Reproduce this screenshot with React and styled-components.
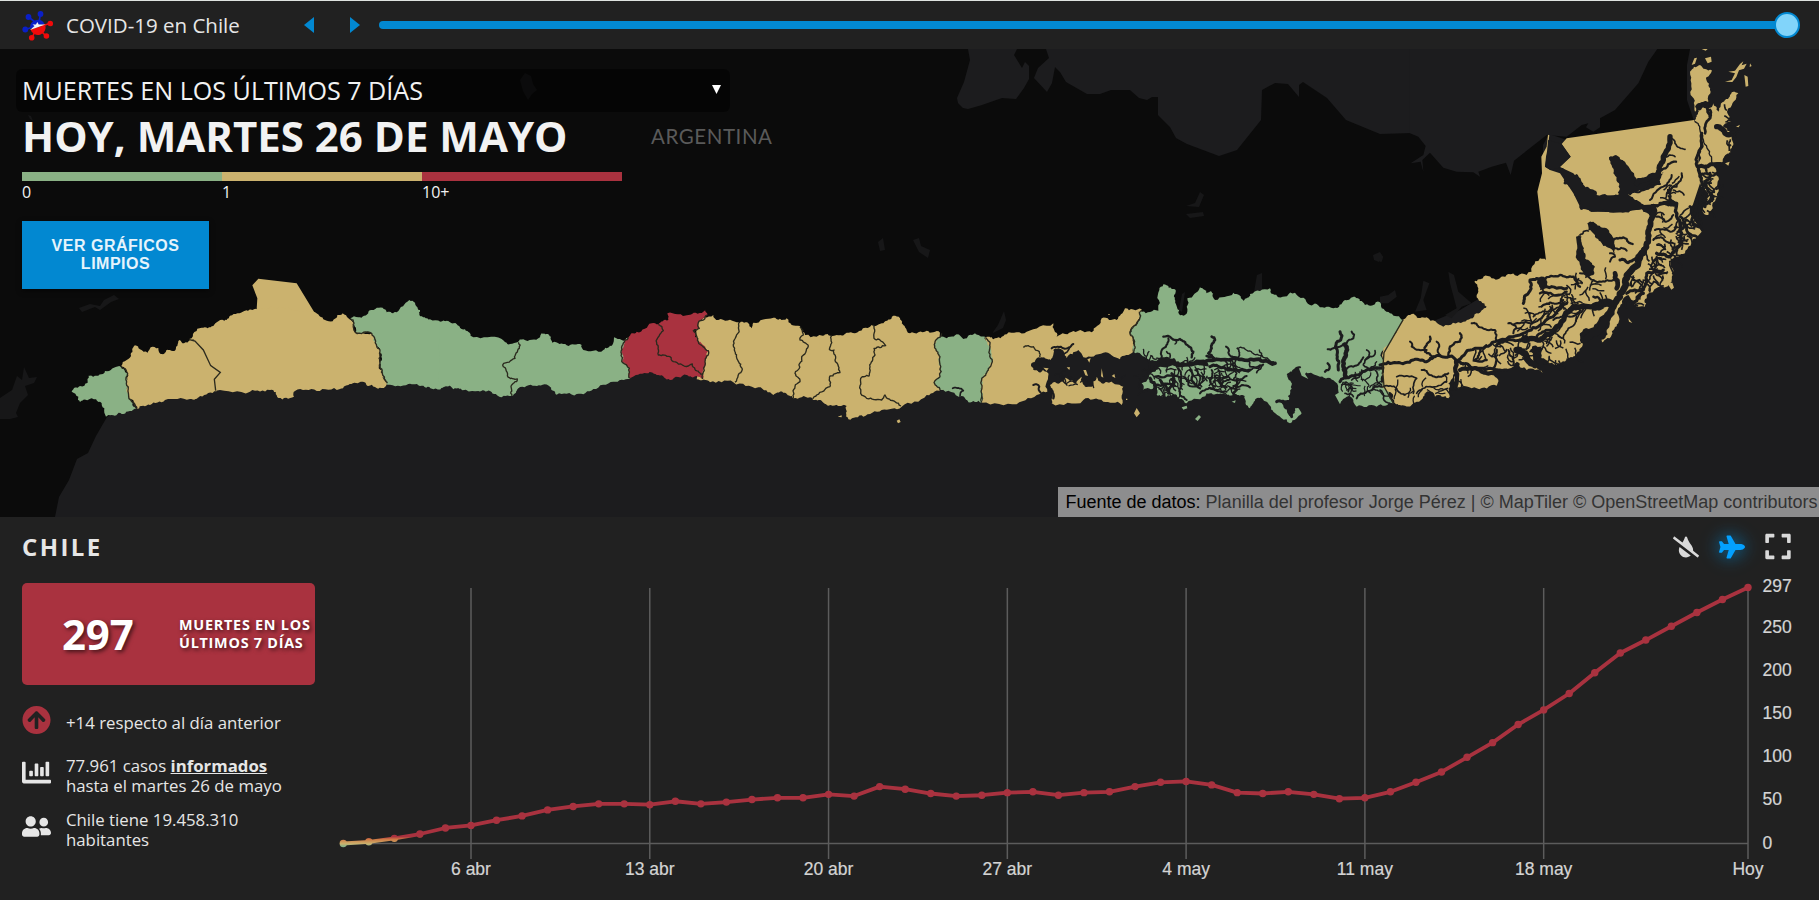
import React from 'react';
import styled, { createGlobalStyle } from 'styled-components';
import { FaArrowCircleUp, FaChartBar, FaUserFriends, FaTintSlash, FaPlane, FaExpand } from 'react-icons/fa';

const GREEN = '#8ab185';
const SAND = '#cbb26e';
const RED = '#a9323f';
const SEA = '#1c1c1e';
const LAND = '#0b0b0b';
const SANS = "'Open Sans', 'Noto Sans', sans-serif";
const ARIAL = "'Liberation Sans', Arial, sans-serif";

const Global = createGlobalStyle`
  * { box-sizing: border-box; }
  body { margin: 0; background: #212121; color: #e6e6e6; font-family: ${SANS}; overflow: hidden; }
`;

const Page = styled.div`
  width: 1819px;
  height: 900px;
  display: flex;
  flex-direction: column;
  background: #212121;
`;

/* ---------- header ---------- */
const Header = styled.header`
  height: 49px;
  flex: none;
  display: flex;
  align-items: center;
  border-top: 1px solid #dfe3e0;
  padding: 0 32px 0 22px;
`;
const Title = styled.h1`
  margin: 0 0 0 13px;
  width: 238px;
  font-size: 20.5px;
  font-weight: 400;
  line-height: 28px;
  white-space: nowrap;
`;
const StepButton = styled.button`
  border: 0;
  background: none;
  padding: 0;
  width: 10px;
  height: 16px;
  margin-right: ${(p) => p.$gap}px;
  svg { display: block; }
`;
const Slider = styled.div`
  flex: 1;
  height: 26px;
  display: flex;
  align-items: center;
  position: relative;
`;
const Track = styled.div`
  flex: 1;
  height: 8px;
  border-radius: 4px;
  background: #0288d1;
`;
const Thumb = styled.span`
  position: absolute;
  right: -13px;
  top: 0;
  width: 26px;
  height: 26px;
  border-radius: 50%;
  background: #81d4fa;
  border: 2px solid #0288d1;
`;

/* ---------- map ---------- */
const MapPanel = styled.section`
  position: relative;
  height: 468px;
  flex: none;
  background: ${LAND};
  overflow: hidden;
`;
const MapCanvas = styled.svg`
  position: absolute;
  left: 0;
  top: 0;
  display: block;
`;
const Overlay = styled.div`
  position: relative;
  width: 730px;
  padding: 20px 0 0 16px;
`;
const Select = styled.div`
  height: 43px;
  border-radius: 6px;
  background: rgba(0, 0, 0, 0.5);
  display: flex;
  align-items: center;
  justify-content: space-between;
  padding: 0 9px 1px 6px;
  font-size: 25.1px;
  color: #f2f2f2;
`;
const Content = styled.div`
  padding-left: 6px;
`;
const DateLine = styled.h2`
  margin: 0;
  height: 60px;
  line-height: 48px;
  font-size: 42px;
  font-weight: 700;
  color: #f2f2f2;
  white-space: nowrap;
`;
const Legend = styled.div`
  display: flex;
`;
const LegendItem = styled.div`
  width: 200px;
  border-top: 9px solid ${(p) => p.$color};
  font-size: 16px;
  line-height: 23px;
  height: 49px;
  color: #f2f2f2;
`;
const MapButton = styled.button`
  width: 187px;
  height: 68px;
  border: 0;
  padding: 0 24px;
  background: #0288d1;
  color: #e6f4fc;
  font: 700 16px/18px ${ARIAL};
  letter-spacing: 0.5px;
  box-shadow: 0 2px 5px rgba(0, 0, 0, 0.5);
`;
const Attribution = styled.div`
  position: absolute;
  right: 0;
  bottom: 0;
  height: 30px;
  width: 761px;
  padding: 0 0 0 7.5px;
  background: #8d8d8e;
  color: #333;
  font: 18px/30px ${ARIAL};
  white-space: nowrap;
  b { color: #000; font-weight: 400; }
`;

/* ---------- bottom panel ---------- */
const Bottom = styled.section`
  flex: 1;
  display: flex;
  padding-left: 22px;
  background: #212121;
`;
const Side = styled.aside`
  width: 293px;
  flex: none;
  padding-top: 14px;
`;
const Region = styled.h3`
  margin: 0 0 20px;
  font-size: 24px;
  line-height: 32px;
  font-weight: 700;
  letter-spacing: 2.4px;
  color: #e6e6e6;
`;
const Card = styled.div`
  height: 102px;
  border-radius: 5px;
  background: ${RED};
  display: flex;
  align-items: center;
  color: #fff;
  font-weight: 700;
  text-shadow: 2px 2px 4px rgba(0, 0, 0, 0.6);
`;
const BigNumber = styled.span`
  width: 157px;
  padding: 0 0 2px 40px;
  font-size: 42px;
  letter-spacing: -0.2px;
`;
const CardLabel = styled.span`
  font-size: 14.4px;
  line-height: 18px;
  letter-spacing: 0.75px;
  white-space: nowrap;
`;
const Facts = styled.ul`
  list-style: none;
  margin: 0;
  padding: 0;
`;
const Fact = styled.li`
  display: flex;
  align-items: center;
  margin-top: ${(p) => p.$top}px;
  font-size: 16.8px;
  line-height: 20px;
  white-space: nowrap;
  u { font-weight: 700; }
  svg {
    width: 29px;
    margin: 0 15px ${(p) => p.$lift}px 0;
    flex: none;
  }
`;
const ChartArea = styled.div`
  flex: 1;
  position: relative;
`;
const Tools = styled.div`
  position: absolute;
  right: 28px;
  top: 15px;
  display: flex;
  align-items: center;
  svg { display: block; }
`;
const Tool = styled.span`
  width: 26px;
  display: flex;
  justify-content: center;
  margin-left: ${(p) => p.$gap || 0}px;
  color: ${(p) => (p.$on ? '#03a0ff' : '#d9d9d9')};
  filter: ${(p) => (p.$on ? 'drop-shadow(0 0 9px #0288d1)' : 'none')};
`;
const ChartSvg = styled.svg`
  display: block;
  text { font: 17.5px ${ARIAL}; fill: #d4d4d4; stroke: #d4d4d4; stroke-width: 0.2px; }
`;

/* ---------- outline helpers ---------- */
const rng = (seed) => () => {
  seed = (seed * 16807) % 2147483647;
  return seed / 2147483647;
};
const parse = (s) => s.trim().split(/\s+/).map((p) => p.split(',').map(Number));

// Roughens a polyline by moving the midpoints of its edges.
function rough(str, amp, closed = true, seed = 7) {
  const r = rng(seed);
  let pts = parse(str);
  if (closed) pts.push(pts[0]);
  for (let k = 0; k < 3; k += 1) {
    const out = [pts[0]];
    for (let i = 1; i < pts.length; i += 1) {
      const [ax, ay] = pts[i - 1];
      const [bx, by] = pts[i];
      const len = Math.hypot(bx - ax, by - ay);
      if (len > 7) {
        const d = (r() - 0.5) * Math.min(len * 0.5, amp * 2);
        out.push([(ax + bx) / 2 - ((by - ay) / len) * d, (ay + by) / 2 + ((bx - ax) / len) * d]);
      }
      out.push(pts[i]);
    }
    pts = out;
  }
  return 'M' + pts.map((p) => `${p[0].toFixed(1)},${p[1].toFixed(1)}`).join('L') + (closed ? 'Z' : '');
}

// Short branching inlets scattered along a line.
function inlets(str, spread, count, seed, size = 26) {
  const r = rng(seed);
  const line = parse(str);
  let d = '';
  for (let i = 0; i < count; i += 1) {
    const t = r() * (line.length - 1);
    const k = Math.floor(t);
    const f = t - k;
    let x = line[k][0] * (1 - f) + line[k + 1][0] * f + (r() - 0.5) * spread;
    let y = line[k][1] * (1 - f) + line[k + 1][1] * f + (r() - 0.5) * spread;
    let a = r() * 6.28;
    d += `M${x.toFixed(1)},${y.toFixed(1)}`;
    for (let s = 0; s < 4; s += 1) {
      a += (r() - 0.5) * 1.6;
      x += (Math.cos(a) * size) / 3;
      y += (Math.sin(a) * size) / 3;
      d += `L${x.toFixed(1)},${y.toFixed(1)}`;
    }
  }
  return d;
}

const Frame = ({ x, y, children }) => (
  <g transform={`translate(${x} ${y}) scale(0.333333)`}>{children}</g>
);
const Area = ({ d, fill, amp = 5 }) => <path d={rough(d, amp)} fill={fill} />;
const Border = ({ d }) => (
  <path d={rough(d, 4, false)} fill="none" stroke="#2b2a1e" strokeWidth="4" strokeLinejoin="round" />
);
const Water = ({ d, w = 5, amp = 5 }) => (
  <path d={rough(d, amp, false)} fill="none" stroke={SEA} strokeWidth={w} strokeLinejoin="round" strokeLinecap="round" />
);

const AYSEN_CHANNELS = [
  ['190,200 215,205 240,207 262,225 280,245 275,262', 7],
  ['205,205 190,235 185,262', 6],
  ['228,208 225,222', 4],
  ['335,200 345,210 335,235 325,250 340,265', 8],
  ['200,245 210,262', 5], ['320,258 345,270', 8],
  ['300,280 400,265 470,268 525,280', 11],
  ['378,230 385,248 405,262', 6],
  ['412,235 450,243 480,256 520,275', 4],
  ['412,235 415,262 405,290', 5], ['478,240 482,262', 4],
  ['370,270 385,295 440,302 480,290', 5],
  ['440,270 450,290 490,283 470,308', 5],
  ['330,290 370,292 400,300 450,300', 9],
  ['390,270 400,290 410,310 400,330', 5],
  ['365,340 400,330 440,318', 6], ['400,348 450,352', 6],
  ['235,295 245,345 240,375 260,390', 6],
  ['270,300 275,325 300,355', 7],
  ['285,300 300,330 305,350', 5],
  ['250,320 265,345 300,345', 6],
  ['215,310 220,345 205,370', 8],
  ['165,320 240,322', 7], ['165,345 225,347', 7],
  ['335,300 330,330 345,350', 6], ['355,300 355,330 380,352', 6],
  ['300,370 340,355 380,365', 6], ['410,330 400,370 430,380', 8],
  ['180,330 200,360', 8], ['150,325 165,355', 10],
  ['720,185 722,210 708,225 712,260 715,300', 9],
  ['735,225 738,255 730,290 738,320', 13],
  ['755,185 760,205 740,220 700,235 683,238', 6],
  ['720,335 750,320 800,300 850,290', 9],
  ['800,240 808,262 790,285 810,302', 5],
  ['825,242 815,260 795,270', 5], ['738,300 760,290 790,262', 6],
  ['830,275 815,290', 4], ['683,280 685,300 675,305', 7],
  ['770,385 800,365 825,350 850,350', 6],
  ['725,345 755,350 745,365', 5], ['735,370 760,380', 5],
  ['825,300 830,325 845,345', 5], ['840,360 850,385 870,400', 5],
  ['785,300 770,325 755,330', 5], ['815,360 845,370 870,378', 4],
  ['565,320 600,292', 6], ['530,395 565,402 575,440', 9],
];

const MAGALLANES_CHANNELS = [
  ['0,975 50,968 100,960 140,965 165,950 215,948 235,965 270,980 330,985 380,990', 9],
  ['150,890 140,915 135,935 160,950', 7], ['90,905 95,920 140,930', 6],
  ['170,905 175,925 180,945', 6], ['240,880 240,905 210,920 205,945', 7],
  ['125,990 150,1005 185,1010 205,1000', 6], ['10,1040 50,1045 75,1065', 5],
  ['50,1010 110,1015 100,1060', 5], ['110,1060 150,1040 200,1025', 5],
  ['228,965 225,1040', 13], ['240,990 300,990 340,1000', 12],
  ['235,960 285,925 345,905 430,880 490,850 560,790', 9],
  ['350,915 400,900 440,890', 9],
  ['275,850 300,862 345,870 350,900', 6], ['300,925 285,960 320,960', 7],
  ['385,850 410,865 400,880', 6], ['400,855 450,850 500,820', 6],
  ['430,790 445,760 450,720 490,715 500,740 560,745', 9],
  ['490,720 540,705 580,710 600,740', 7],
  ['480,760 520,765 560,755', 7], ['485,800 520,790 550,780', 6],
  ['460,830 500,815 555,785', 5],
  ['430,900 480,900 530,860 580,800 640,800', 16],
  ['500,910 530,875 545,840', 5], ['550,895 575,860 590,830', 5],
  ['410,930 440,950 465,975', 20], ['350,930 340,985', 7], ['385,930 400,975', 6],
  ['470,890 510,870 545,850', 8], ['520,840 570,830 620,800', 6],
  ['600,700 640,720 665,725 700,720', 6],
  ['785,640 755,690 735,740 700,800 660,870 610,900', 20],
  ['705,700 710,745', 14], ['645,800 690,790', 25], ['640,770 660,780', 7],
  ['720,660 745,668 780,640 800,615', 9],
  ['700,600 740,597 758,612', 7], ['705,625 740,632', 6],
  ['690,640 705,650 690,665', 6],
  ['820,500 812,550 805,600 790,640', 17],
  ['840,490 890,490 900,550 905,610 870,650 830,640', 10],
  ['870,290 850,360 835,400 770,430', 16],
  ['870,295 885,310 915,328', 5], ['850,350 885,350', 5], ['845,390 888,365', 7],
  ['905,400 890,440 870,450 870,490', 6], ['875,405 850,440 810,480', 6],
  ['880,450 912,465', 5], ['750,463 780,455 815,430 840,432', 6],
  ['830,530 855,545 880,525', 6], ['825,570 870,575 890,560', 6],
  ['820,600 850,595 880,610', 6], ['930,500 935,540 960,560', 9],
  ['900,530 920,570 950,590', 8], ['945,245 965,280 985,330 1000,372', 4],
  ['965,280 955,340 955,390 970,440 950,480 950,540', 9],
  ['990,400 975,430 1000,470 975,500', 9], ['960,405 990,405 1010,400', 7],
  ['1010,260 1035,280 1060,280', 16], ['990,210 985,240 975,280', 8],
  ['950,200 985,190 990,230', 9], ['955,380 1030,375', 12],
  ['830,650 820,690 860,700', 6], ['740,760 790,750 800,700 850,690', 9],
  ['760,790 790,760', 10],
];

function ChileMap() {
  return (
    <MapCanvas width="1819" height="468" viewBox="0 49 1819 468">
      <rect x="0" y="49" width="1819" height="468" fill={LAND} />
      <g fill={SEA}>
        <path d="M55,517L59,497L69,480L77,459L88,453L96,436L107,417L137,400L300,380L560,365L900,350L1030,352L1050,340L1120,345L1135,325L1160,330L1210,350L1280,355L1335,325L1400,335L1460,310L1510,280L1540,270L1552,250L1545,200L1543,165L1543,145L1549,134L1567,140L1600,140L1694,121L1687,100L1687,65L1690,49L1819,49V517Z" />
        <path d="M968,49L970,60L964,82L957,98L958,103L963,108L968,109L982,105L1002,98L1016,99L1024,88L1029,79L1029,66L1025,62L1022,68L1014,55L1017,49ZM1046,49L1049,58L1038,68L1034,78L1047,92L1052,83L1055,67L1060,72L1066,82L1087,94L1100,94L1111,90L1130,90L1139,98L1147,100L1152,97L1158,97V115L1170,127L1176,138L1187,144L1219,156L1237,150L1261,120L1262,90L1275,83L1288,84L1299,97V85L1303,82L1327,98L1346,120L1380,134L1412,133V49Z" />
      </g>
      <Frame x={1380} y={40}>
        <path fill={SEA} d="M90,27V280L115,290L137,318L130,345L92,370L122,365L130,395L127,360L150,338L190,383L230,395L280,397L300,410L295,395L335,380L378,368L392,405L402,362L500,285L560,290L605,255L625,250L618,262L640,275L660,262V235L705,210L775,130L805,65L832,27Z" />
        <path fill="#181819" d="M0,640L10,650L5,665L0,665ZM130,722L148,730L130,780L140,810L105,815L122,775ZM205,695L222,705L235,755L275,790L245,800L215,835L195,825L230,805L210,730ZM0,770L25,765L45,750L50,770L25,790L0,790Z" />
      </Frame>
      <g fill="#171718">
        <path d="M0,398L12,390L17,376L22,380L24,367L29,378L37,377L34,383L25,386L28,395L20,403L16,413L18,417L10,419L0,419Z" />
        <path d="M79,308L90,304L100,306L104,300L114,295L119,299L111,302L100,310L95,307L82,312Z" />
        <path d="M520,80L525,73L531,76L533,84L537,90L532,94L528,100L523,91ZM28,115L31,116L33,121L30,119ZM1186,206L1195,203L1200,192L1204,195L1199,207ZM1186,214L1203,212L1204,216L1190,218ZM878,242L883,238L885,250L880,251ZM913,240L919,238L921,246L930,250L928,258L919,252ZM1373,255L1380,252L1383,257L1379,262L1374,260ZM1257,275L1262,273L1262,290L1254,292ZM993,332L998,325L1004,311L1006,320L1003,328L993,333ZM1182,294L1185,292L1182,312L1179,310Z" />
      </g>

      <Frame x={0} y={260}>
        <Area fill={GREEN} d="215,395 240,378 263,368 266,347 280,350 315,333 358,318 383,340 380,365 386,410 410,447 370,462 335,465 318,470 313,445 300,425 275,415 240,427 235,410" />
        <Area fill={SAND} d="364,318 380,300 392,282 405,256 420,268 443,278 452,262 475,264 482,282 505,270 523,273 538,240 552,250 570,240 600,245 660,337 650,394 600,408 570,417 495,420 450,435 412,447 386,410 380,365 383,340" />
        <path fill={SAND} d="M735,154L770,148L772,115L757,76L775,56L890,70L942,155L960,180L900,220Z" />
        <Area fill={SAND} d="568,237 605,203 640,198 655,184 680,180 690,167 735,152 770,148 840,140 942,155 975,180 998,184 1012,165 1028,160 1045,175 1062,190 1066,217 1115,220 1130,258 1140,270 1140,310 1148,345 1162,370 1145,384 1105,378 1082,365 1045,375 1020,387 950,393 885,393 882,410 835,414 828,397 810,390 750,395 647,392 643,358 661,337 632,317 610,270 585,243" />
        <Area fill={GREEN} d="1050,175 1075,172 1105,155 1148,143 1160,157 1190,157 1228,120 1245,128 1260,150 1258,165 1290,178 1355,190 1380,202 1380,388 1350,375 1300,388 1265,377 1225,372 1162,374 1148,345 1140,310 1140,270 1130,258 1115,220 1066,217 1062,190" />
        <Border d="364,320 383,340 380,365 386,410 410,447" />
        <path d="M568,239L585,243L610,270L632,317L661,337L643,358L647,392" fill="none" stroke="#2b2a1e" strokeWidth="4" />
        <Border d="1050,175 1062,190 1066,217 1115,220 1130,258 1140,270 1140,310 1148,345 1162,370" />
      </Frame>

      <Frame x={440} y={290}>
        <Area fill={GREEN} d="0,95 40,100 75,118 100,142 185,147 210,162 235,155 300,200 215,317 185,322 150,303 115,303 40,298 20,285 0,292" />
        <Area fill={GREEN} d="233,157 250,148 300,142 305,130 333,140 337,158 380,166 425,165 430,180 490,180 517,165 522,142 545,150 565,143 570,240 570,267 520,275 460,297 410,312 350,314 330,290 285,287 235,295 215,317 205,262 200,225" />
        <Area fill={SAND} d="770,98 820,75 835,90 890,97 925,100 935,115 940,98 1000,83 1040,85 1055,105 1080,108 1095,135 1165,143 1190,135 1215,142 1215,345 1165,347 1140,330 1110,322 1060,325 1035,308 1000,315 955,292 880,277 810,277 770,268" />
        <Area fill={RED} d="565,143 590,125 635,100 655,103 685,90 682,70 745,75 790,65 797,56 802,75 775,98 778,115 760,122 775,155 805,182 795,215 788,267 770,258 740,255 690,270 655,255 620,250 570,265 568,235 548,218 543,188 555,150" />
        <Border d="235,157 238,175 225,205 188,225 205,262 232,267 213,290 215,317" />
        <Border d="565,143 555,150 543,188 548,218 568,235 570,265" />
        <Border d="655,103 670,122 650,158 655,195 690,200 700,215 745,228 757,222 765,238 790,252" />
        <Border d="802,75 775,98 778,115 760,122 775,155 805,182 795,215 788,267" />
        <Border d="897,97 888,140 883,180 893,210 907,237 885,277" />
        <Border d="1080,110 1090,135 1080,150 1105,168 1085,205 1078,235 1065,250 1080,275 1065,290 1060,325" />
      </Frame>

      <Frame x={800} y={270}>
        <Area fill={SAND} d="60,200 90,197 140,188 165,190 215,165 250,160 280,137 300,145 315,172 330,190 380,182 420,188 430,360 380,375 305,410 245,420 190,440 145,448 140,408 75,402 60,385" />
        <Area fill={SAND} d="555,202 580,208 620,193 680,185 760,160 770,200 820,183 875,187 905,145 950,150 975,115 1025,118 1015,155 990,188 1002,205 1000,245 960,268 910,248 850,262 835,240 800,265 775,235 760,240 752,270 725,262 695,280 700,300 740,305 742,365 720,372 650,403 545,398 535,300" />
        <Area fill={GREEN} d="410,208 430,200 470,193 490,207 525,190 555,200 570,230 577,275 565,300 545,330 545,398 505,397 485,378 420,360 402,338 420,320 420,260 405,235" />
        <Area fill={SAND} amp={7} d="750,345 770,340 800,320 830,345 845,320 855,350 875,350 890,320 905,340 920,335 970,350 965,405 910,395 850,390 755,400 760,370" />
        <path fill={SAND} d="M800,292l10,0l-2,8zM862,268l10,-4l-4,14zM1002,430l8,-16l10,16l-10,12zM290,452l8,-4l4,8l-8,4zM113,440l12,-4v6zM850,300l8,0l6,18l-8,-2zM905,295l5,28l-7,-4zM730,293l16,2l-6,8zM978,386h4v4h-4zM925,132h4v3h-4zM935,318l8,-6l3,12z" />
        <Border d="95,197 88,238 102,240 105,270 120,308 90,318 90,350 50,375 38,387" />
        <Border d="218,165 222,205 238,208 257,227 222,235 225,255 210,290 207,318 182,325 182,370 200,385 245,390 255,375 285,395 303,408" />
        <Border d="425,190 410,208 405,235 420,260 420,320 402,338 420,360" />
        <Border d="557,202 570,230 577,275 565,300 545,330 545,398" />
        <Border d="670,232 700,230 718,245 720,262" />
        <Water d="755,235 790,235 820,222" w={6} />
        <Water d="775,240 790,250 808,235" w={5} />
        <Water d="700,345 718,350 722,368" w={6} />
        <Water d="700,285 720,300" w={14} />
        <Water d="458,355 490,362 480,378" w={5} />
        <Water d="745,345 760,385" w={7} />
        <path d={inlets('780,325 850,338 960,330', 18, 12, 81, 22)} stroke={SEA} strokeWidth="4" fill="none" />
        <Border d="1025,120 1015,155 990,188 1002,205 1000,245" />
      </Frame>

      <Frame x={1100} y={270}>
        <Area fill={GREEN} amp={6} d="102,245 105,215 90,190 118,150 125,125 175,122 178,60 190,43 225,58 226,92 237,132 255,135 262,85 300,52 320,70 335,65 345,90 400,68 430,92 450,72 510,55 535,82 585,68 630,105 650,102 700,115 735,90 765,80 795,105 840,97 870,130 910,150 850,240 848,285 845,340 880,400 830,410 770,410 760,390 740,380 720,395 705,335 660,320 590,290 560,315 575,345 567,390 545,400 575,440 585,415 605,430 570,460 520,425 500,395 470,385 450,415 430,380 400,372 370,370 335,370 320,370 260,400 230,375 200,380 170,375 165,350 130,360 125,340 165,305 180,290 330,290 320,275 240,278 200,260 150,272 105,250" />
        <path fill={GREEN} d="M245,412l15,-5l2,8l-12,4zM285,447l12,-12l6,6l-10,12zM395,395l12,-4l-2,8zM595,290l30,10l-10,12l10,15l-20,-10zM705,375l20,-12l3,20l-8,20z" />
        {AYSEN_CHANNELS.map(([d, w]) => <Water key={d} d={d} w={w} />)}
        <path d={inlets('150,330 250,335 350,320 420,330', 75, 70, 31, 26)} stroke={SEA} strokeWidth="4" fill="none" />
        <path d={inlets('720,370 790,330 840,320', 60, 20, 91, 24)} stroke={SEA} strokeWidth="3.6" fill="none" />
        <path d={inlets('130,262 200,262 290,270', 20, 10, 91, 20)} stroke={SEA} strokeWidth="4" fill="none" />
        <Border d="118,125 118,150 90,190 104,215 102,245" />
      </Frame>

      <Frame x={1380} y={40}>
        <Area fill={SAND} amp={7} d="70,838 105,825 140,832 190,860 250,845 290,820 320,800 290,765 295,745 283,725 310,710 360,715 385,702 440,705 480,655 498,660 620,600 830,500 870,640 880,690 870,730 800,765 795,800 760,790 745,765 720,800 715,850 695,885 662,912 680,870 700,790 650,850 600,880 610,905 590,940 560,955 525,975 485,955 490,915 450,930 470,975 488,1000 440,990 410,965 390,985 330,995 355,1020 350,1037 290,1045 232,1046 225,1000 205,1030 205,1075 165,1070 150,1055 110,1085 75,1097 45,1090 35,1060 8,1040 12,990 8,940" />
        <path fill={SAND} d="M498,660L472,455L486,400L484,350L500,320L504,284L508,286L500,350L495,380L510,390L540,400L580,460L600,500L640,515L720,517L790,507L808,535L800,590L780,640L600,720Z" />
        <path fill={SAND} d="M560,295L942,240L965,280L955,360L960,430L930,520L965,575L945,598L915,590L890,560L880,490L790,495L740,465L715,465L640,468L580,400L538,380L572,350L545,312Z" />
        <Area fill={SAND} amp={6} d="825,505 890,495 945,590 915,640 870,655 800,650" />
        <Area fill={SAND} amp={6} d="930,95 960,75 995,90 978,115 990,150 985,185 950,200 945,215 932,165" />
        <Area fill={SAND} amp={6} d="955,210 985,205 1000,190 1015,215 1035,180 1060,155 1075,160 1045,205 1052,245 1030,260 1055,285 1060,310 1045,345 1020,370 1000,372 1015,410 1012,470 985,525 968,515 985,460 960,430 955,370 965,300 945,240" />
        <path fill={SAND} d="M935,75l8,-20l8,-2l-6,18zM975,55l18,-5l2,15l-12,5zM965,27h18l-6,5zM1035,125l20,-5l10,-20l-20,-5l20,-3l15,-20l10,-8l-5,12l15,-5l-8,15l-15,5l-8,20l-12,15zM1093,105l10,5l2,28l-8,2zM1110,70l5,8l-6,3zM1068,260l12,-6l-4,8zM1035,370l14,-5l-4,12zM745,835l12,14l-10,-4zM862,730l15,-2l5,15l-8,6z" />
        <g fill={SEA}>
          <path d="M504,300L545,312L572,350L538,383L512,390L495,380L498,350L502,330Z" />
          <path d={rough('538,383 560,398 590,402 610,430 600,450 620,440 650,455 650,465 715,465 718,435 700,400 687,352 708,345 735,365 770,425 825,405 850,395 840,430 800,450 745,463 770,480 800,495 860,485 890,490 885,500 830,500 810,530 785,507 720,517 640,515 600,508 600,480 580,455 550,430 555,410', 4)} />
          <path d={rough('622,550 640,545 680,565 702,600 705,640 690,625 670,618 645,585 625,570', 3)} />
          <path d={rough('588,590 605,590 612,625 615,655 645,680 640,705 615,715 592,660', 4)} />
          <path d={rough('470,712 500,715 500,745 480,750', 4)} />
        </g>
        <Water d="600,585 625,573" w={5} />
        {MAGALLANES_CHANNELS.map(([d, w]) => <Water key={d} d={d} w={w} />)}
        <path d={inlets('440,880 560,780 660,760', 90, 50, 53, 28)} stroke={SEA} strokeWidth="4.5" fill="none" />
        <path d={inlets('260,970 350,920 450,950 570,930', 60, 44, 63, 26)} stroke={SEA} strokeWidth="4.5" fill="none" />
        <path d={inlets('760,780 840,670 900,590 980,480', 75, 80, 17, 26)} stroke={SEA} strokeWidth="5" fill="none" />
        <path d={inlets('830,640 860,520 880,430', 40, 16, 41, 24)} stroke={SEA} strokeWidth="4.5" fill="none" />
        <path d={inlets('980,480 1000,390', 36, 18, 27, 24)} stroke={SEA} strokeWidth="5" fill="none" />
        <path d={inlets('1050,340 1060,260 1040,190', 18, 10, 27, 16)} stroke={SEA} strokeWidth="5" fill="none" />
        <path d={inlets('60,1060 150,1060 260,1020', 40, 20, 77, 24)} stroke={SEA} strokeWidth="4" fill="none" />
        <path d="M70,838L12,938L8,990L12,1040L40,1090" fill="none" stroke="#2b2a1e" strokeWidth="4" />
      </Frame>

      <text x="651" y="143.5" fontFamily="Lato, sans-serif" fontSize="20.5" fill="#5a5a5a" textLength="121">ARGENTINA</text>
    </MapCanvas>
  );
}

/* ---------- chart ---------- */
const DEATHS = [0, 2, 6, 11, 18, 21, 27, 32, 39, 43, 46, 46, 45, 49, 46, 48, 51, 53, 53, 57, 55, 66, 63, 58, 55, 56, 59,
  60, 56, 59, 60, 66, 71, 72, 68, 59, 58, 60, 57, 52, 53, 60, 71, 83, 100, 117, 138, 155, 174, 198, 221, 236, 252, 268, 283, 297];
const DAYS = [[5, '6 abr'], [12, '13 abr'], [19, '20 abr'], [26, '27 abr'], [33, '4 may'], [40, '11 may'], [47, '18 may'], [55, 'Hoy']];
const px = (i) => 28.3 + i * 25.54;
const py = (v) => 326.5 - v * 0.862;

function Chart() {
  const line = DEATHS.map((v, i) => `${px(i)},${py(v)}`).join(' ');
  return (
    <ChartSvg width="1504" height="383" viewBox="0 0 1504 383">
      <defs>
        <linearGradient id="level" gradientUnits="userSpaceOnUse" x1="0" y1={py(-3)} x2="0" y2={py(10)}>
          <stop offset="0" stopColor={GREEN} />
          <stop offset="0.2" stopColor={SAND} />
          <stop offset="0.6" stopColor="#cf7a45" />
          <stop offset="0.85" stopColor={RED} />
        </linearGradient>
      </defs>
      <path d={`M${px(0)},326.5H${px(55)}`} stroke="#5c5c5c" strokeWidth="1.5" />
      {DAYS.map(([i, label]) => (
        <g key={label}>
          <path d={`M${px(i)},71V342`} stroke="#5c5c5c" strokeWidth="1.5" />
          <text x={px(i)} y="358" textAnchor="middle">{label}</text>
        </g>
      ))}
      {[0, 50, 100, 150, 200, 250, 297].map((v) => (
        <text key={v} x="1447.5" y={py(v) + 5}>{v}</text>
      ))}
      <polyline points={line} fill="none" stroke="url(#level)" strokeWidth="3.8" strokeLinejoin="round" />
      {DEATHS.map((v, i) => <circle key={i} cx={px(i)} cy={py(v)} r="3.7" fill="url(#level)" />)}
    </ChartSvg>
  );
}

const Logo = () => (
  <svg width="31" height="32" viewBox="0 0 31 32">
    <g stroke="#0a1fc8" strokeWidth="1.6" fill="#0a1fc8">
      <path d="M13,13L6.5,8M17,13L18.5,5M11,18L3.5,20.5" />
      <circle cx="6.5" cy="8" r="2.9" stroke="none" />
      <circle cx="18.5" cy="5" r="2.9" stroke="none" />
      <circle cx="3.3" cy="20.5" r="2.9" stroke="none" />
    </g>
    <g stroke="#f00a0a" strokeWidth="1.6" fill="#f00a0a">
      <path d="M14,20L10,29M17,20L24,27M19,17L28,14.5" />
      <circle cx="9.7" cy="28.8" r="2.8" stroke="none" />
      <circle cx="24.4" cy="27" r="2.8" stroke="none" />
      <circle cx="28.3" cy="14.5" r="2.8" stroke="none" />
    </g>
    <path d="M8,19A7.7,7.7 0 0 1 22.5,15Z" fill="#0a1fc8" />
    <path d="M8.5,20.5A7.7,7.7 0 0 0 23.3,16Z" fill="#f00a0a" />
    <path d="M8,21L12.5,17L10.5,15.5H14L15.3,13L16.7,15.5H23.5Z" fill="#f4f4f4" />
  </svg>
);

export default function App() {
  return (
    <Page>
      <Global />
      <Header>
        <Logo />
        <Title>COVID-19 en Chile</Title>
        <StepButton $gap={36}><svg width="10" height="16"><path d="M10,0V16L0,8Z" fill="#0288d1" /></svg></StepButton>
        <StepButton $gap={19}><svg width="10" height="16"><path d="M0,0V16L10,8Z" fill="#0288d1" /></svg></StepButton>
        <Slider><Track /><Thumb /></Slider>
      </Header>

      <MapPanel>
        <ChileMap />
        <Overlay>
          <Select>
            <span>MUERTES EN LOS ÚLTIMOS 7 DÍAS</span>
            <svg width="9" height="10"><path d="M0,0H9L4.5,9Z" fill="#fff" /></svg>
          </Select>
          <Content>
            <DateLine>HOY, MARTES 26 DE MAYO</DateLine>
            <Legend>
              <LegendItem $color={GREEN}>0</LegendItem>
              <LegendItem $color={SAND}>1</LegendItem>
              <LegendItem $color={RED}>10+</LegendItem>
            </Legend>
            <MapButton>VER GRÁFICOS LIMPIOS</MapButton>
          </Content>
        </Overlay>
        <Attribution><b>Fuente de datos:</b> Planilla del profesor Jorge Pérez | © MapTiler © OpenStreetMap contributors</Attribution>
      </MapPanel>

      <Bottom>
        <Side>
          <Region>CHILE</Region>
          <Card>
            <BigNumber>297</BigNumber>
            <CardLabel>MUERTES EN LOS<br />ÚLTIMOS 7 DÍAS</CardLabel>
          </Card>
          <Facts>
            <Fact $top={20} $lift={5}><FaArrowCircleUp color={RED} size={30} /><span>+14 respecto al día anterior</span></Fact>
            <Fact $top={16} $lift={7}><FaChartBar size={29} /><span>77.961 casos <u>informados</u><br />hasta el martes 26 de mayo</span></Fact>
            <Fact $top={14} $lift={8}><FaUserFriends size={29} /><span>Chile tiene 19.458.310<br />habitantes</span></Fact>
          </Facts>
        </Side>
        <ChartArea>
          <Chart />
          <Tools>
            <Tool><FaTintSlash size={28} /></Tool>
            <Tool $on $gap={20}><FaPlane size={26} /></Tool>
            <Tool $gap={20}><FaExpand size={29} /></Tool>
          </Tools>
        </ChartArea>
      </Bottom>
    </Page>
  );
}
